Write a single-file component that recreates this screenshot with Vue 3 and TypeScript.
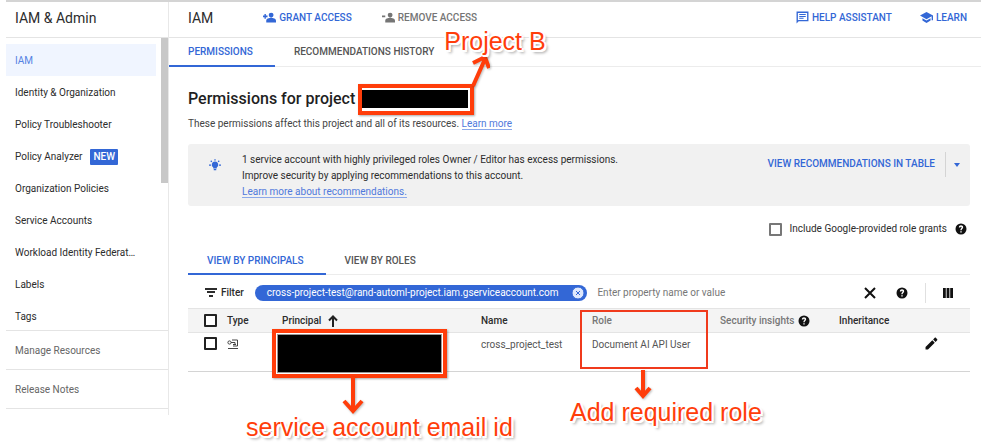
<script setup lang="ts">
import { ref } from 'vue'

interface NavItem {
  label: string
  badge?: string
}

const navItems: NavItem[] = [
  { label: 'IAM' },
  { label: 'Identity & Organization' },
  { label: 'Policy Troubleshooter' },
  { label: 'Policy Analyzer', badge: 'NEW' },
  { label: 'Organization Policies' },
  { label: 'Service Accounts' },
  { label: 'Workload Identity Federat…' },
  { label: 'Labels' },
  { label: 'Tags' },
]
const footerItems: string[] = ['Manage Resources', 'Release Notes']

const activeNav = ref('IAM')
const query = ref('')
const includeGrants = ref(false)
const allSelected = ref(false)
const rowSelected = ref(false)

const helpPath =
  'M12 1a11 11 0 1 0 0 22 11 11 0 0 0 0-22zm1.400 18h-2.800v-2.600h2.800V19zm2.600-9.200c-.6 1.300-2.600 2.200-2.600 4.900h-2.800c0-3.700 2.700-4.300 2.700-6.100 0-.8-.6-1.300-1.300-1.300s-1.400.6-1.400 1.700H7.700C7.700 6.500 9.500 4.700 12 4.700s4.300 1.500 4.300 3.700c0 .5-.1 1-.3 1.400z'
</script>

<template>
  <div class="console">
    <aside class="sidebar">
      <h2 class="product">IAM &amp; Admin</h2>
      <div class="scroller">
        <nav class="nav">
          <a
            v-for="item in navItems"
            :key="item.label"
            href="#"
            class="nav-item"
            :class="{ active: item.label === activeNav }"
            @click.prevent="activeNav = item.label"
          >
            {{ item.label }}<span v-if="item.badge" class="badge">{{ item.badge }}</span>
          </a>
        </nav>
        <div class="scrollbar"></div>
      </div>
      <a v-for="label in footerItems" :key="label" href="#" class="footer-item">{{ label }}</a>
    </aside>

    <main class="main">
      <header class="toolbar">
        <h1 class="page-name">IAM</h1>
        <button class="action primary grant">
          <svg class="icon" viewBox="0 0 24 24"><path d="M15 12a4.500 4.500 0 1 0 0-9 4.500 4.500 0 0 0 0 9zm0 .5c-3.500 0-9 1.600-9 5.300V21h18v-3.200c0-3.700-5.500-5.300-9-5.300zM5.300 11.500h3V8.500h-3V5.500h-2.600v3H0v3h2.700v3h2.600z" /></svg>
          GRANT ACCESS
        </button>
        <button class="action muted">
          <svg class="icon" viewBox="0 0 24 24"><path d="M15 12a4.500 4.500 0 1 0 0-9 4.500 4.500 0 0 0 0 9zm0 .5c-3.500 0-9 1.600-9 5.300V21h18v-3.200c0-3.700-5.500-5.300-9-5.300zM0 8.500h6v3H0z" /></svg>
          REMOVE ACCESS
        </button>
        <div class="toolbar-end">
          <button class="action primary">
            <svg class="icon" viewBox="0 0 24 24"><path fill-rule="evenodd" d="M1 1v22l4-4h18V1zm2.500 2.500h17v13H4.400l-.9.900zM6 5.500h12v2H6zm0 3.500h12v2H6zm0 3.500h8v2H6z" /></svg>
            HELP ASSISTANT
          </button>
          <button class="action primary">
            <svg class="icon" viewBox="0 0 24 24"><path d="M4.500 13.200v4.500L12 22l7.500-4.300v-4.500L12 17.500zM12 2 0 8.500 12 15l9.500-5.200V17H24V8.500z" /></svg>
            LEARN
          </button>
        </div>
      </header>

      <div class="tabs">
        <button class="tab selected">PERMISSIONS</button>
        <button class="tab">RECOMMENDATIONS HISTORY</button>
      </div>

      <section class="content">
        <div class="title-row">
          <h3 class="title">Permissions for project</h3>
          <div class="frame project-frame">
            <div class="redacted"></div>
            <svg class="arrow project-arrow" viewBox="0 0 20 34"><path d="M3 32 15 5M3 9 15 3l4 11" /></svg>
            <span class="note project-note">Project B</span>
          </div>
        </div>
        <p class="subtitle">
          These permissions affect this project and all of its resources.
          <a href="#" class="link">Learn more</a>
        </p>

        <div class="banner">
          <svg class="bulb" viewBox="0 0 24 24"><path d="M12 5a6.500 6.500 0 0 0-3.500 12v2h7v-2A6.500 6.500 0 0 0 12 5zM9.500 20h5v2.500h-5zM11 0h2v3.500h-2zM0 11h4v2.500H0zm20 0h4v2.500h-4zM2.600 4.400 4.400 2.600l2.200 2.200-1.800 1.800zM19.600 2.600l1.800 1.800-2.200 2.200-1.800-1.800z" /></svg>
          <div class="banner-text">
            1 service account with highly privileged roles Owner / Editor has excess permissions.<br />
            Improve security by applying recommendations to this account.<br />
            <a href="#" class="link">Learn more about recommendations.</a>
          </div>
          <button class="action primary">VIEW RECOMMENDATIONS IN TABLE</button>
          <button class="more" aria-label="More options">
            <svg viewBox="0 0 6 4"><path d="M0 0h6L3 4z" /></svg>
          </button>
        </div>

        <div class="grants">
          <label class="check-label">
            <input v-model="includeGrants" type="checkbox" class="check soft" />
            Include Google-provided role grants
          </label>
          <svg class="help" viewBox="0 0 24 24"><path :d="helpPath" /></svg>
        </div>

        <div class="tabs view-tabs">
          <button class="tab selected">VIEW BY PRINCIPALS</button>
          <button class="tab">VIEW BY ROLES</button>
        </div>

        <div class="filter">
          <svg class="filter-icon" viewBox="0 0 12 9"><path d="M0 0h12v2H0zM2 3h8v2H2zM4 7h4v2H4z" /></svg>
          <label for="filter-input" class="filter-label">Filter</label>
          <span class="chip">
            cross-project-test@rand-automl-project.iam.gserviceaccount.com
            <button class="chip-close" aria-label="Remove filter">
              <svg viewBox="0 0 12 12"><circle cx="6" cy="6" r="6" /><path d="m4 4 4 4M8 4 4 8" /></svg>
            </button>
          </span>
          <input id="filter-input" v-model="query" class="filter-input" placeholder="Enter property name or value" />
          <button class="icon-button" aria-label="Clear filters">
            <svg class="clear" viewBox="0 0 12 12"><path d="m1 1 10 10M11 1 1 11" /></svg>
          </button>
          <button class="icon-button" aria-label="Filter help">
            <svg class="help" viewBox="0 0 24 24"><path :d="helpPath" /></svg>
          </button>
          <span class="separator"></span>
          <button class="icon-button" aria-label="Columns">
            <svg class="columns" viewBox="0 0 10 10"><path d="M0 0h2.800v10H0zM3.600 0h2.800v10H3.600zM7.200 0H10v10H7.200z" /></svg>
          </button>
        </div>

        <table class="table">
          <colgroup>
            <col class="c-check" /><col class="c-type" /><col class="c-principal" /><col class="c-name" />
            <col class="c-role" /><col class="c-insights" /><col class="c-inheritance" /><col />
          </colgroup>
          <thead>
            <tr>
              <th><input v-model="allSelected" type="checkbox" class="check" aria-label="Select all" /></th>
              <th>Type</th>
              <th>
                <span class="head-cell">Principal
                  <svg class="sort" viewBox="0 0 10 12"><path d="M5 12V1.500M1 5.500l4-4 4 4" /></svg>
                </span>
              </th>
              <th>Name</th>
              <th class="light">Role</th>
              <th class="light">
                <span class="head-cell insights">Security insights
                  <svg class="help" viewBox="0 0 24 24"><path :d="helpPath" /></svg>
                </span>
              </th>
              <th>Inheritance</th>
              <th></th>
            </tr>
          </thead>
          <tbody>
            <tr>
              <td><input v-model="rowSelected" type="checkbox" class="check" aria-label="Select cross_project_test" /></td>
              <td>
                <svg class="account" viewBox="0 0 12 10"><circle cx="2.500" cy="3.500" r="1.600" /><path d="M4 3.500h4v1.500M5 1h5.500v6H6M6 5.500h3M1 9.500h10" /></svg>
              </td>
              <td class="marked">
                <div class="frame principal-frame">
                  <div class="redacted"></div>
                  <svg class="arrow principal-arrow" viewBox="0 0 22 38"><path d="M11 0v34M2 24l9 10 9-10" /></svg>
                  <span class="note principal-note">service account email id</span>
                </div>
              </td>
              <td>cross_project_test</td>
              <td class="marked">
                <div class="role-frame">
                  <svg class="arrow role-arrow" viewBox="0 0 18 30"><path d="M9 0v26M2 18l7 8 7-8" /></svg>
                  <span class="note role-note">Add required role</span>
                </div>
                <div class="role">Document AI API User</div>
              </td>
              <td></td>
              <td></td>
              <td>
                <button class="edit" aria-label="Edit principal">
                  <svg viewBox="0 0 24 24"><path d="M1 18.500V23h4.500L18 10.500 13.500 6zM22.500 6c.6-.6.600-1.400 0-2l-2.500-2.500c-.6-.6-1.400-.6-2 0L15 4.500 19.500 9z" /></svg>
                </button>
              </td>
            </tr>
          </tbody>
        </table>
      </section>
    </main>
  </div>
</template>

<style>
body {
  background: #fff;
}
</style>

<style scoped>
.console {
  --blue: #3367d6;
  --line: #e4e4e4;
  --red: #ff3d0a;
  display: flex;
  align-items: flex-start;
  margin-left: 6px;
  border-top: 2px solid #d4d4d4;
  font: 10px/16px Roboto, sans-serif;
  color: #2c2c2c;
}
* {
  box-sizing: border-box;
}
h1, h2, h3, p {
  margin: 0;
  font-weight: 400;
}
button {
  padding: 0;
  border: 0;
  background: none;
  font: inherit;
  color: inherit;
}
svg {
  display: block;
  flex: none;
  fill: currentColor;
}
a {
  color: inherit;
  text-decoration: none;
}
.sidebar {
  flex: none;
  width: 163px;
  height: 413px;
  border-right: 1px solid #e8e8e8;
}
.product, .page-name {
  font-size: 14px;
  line-height: 32px;
}
.product {
  height: 36px;
  padding-left: 9px;
  border-bottom: 1px solid var(--line);
}
.scroller {
  display: flex;
  height: 293px;
  overflow: hidden;
  border-bottom: 1px solid var(--line);
}
.nav {
  flex: 1;
  padding-top: 6px;
}
.nav-item {
  display: flex;
  align-items: center;
  gap: 8px;
  height: 32px;
  margin-right: 5px;
  padding: 2px 0 0 9px;
  white-space: nowrap;
}
.nav-item.active {
  background: #f0f5ff;
  color: #5583e3;
}
.badge {
  padding: 0 3px;
  border-radius: 1px;
  background: var(--blue);
  color: #fff;
  font-weight: 500;
}
.scrollbar {
  width: 7px;
  height: 145px;
  background: #c8c8c8;
}
.footer-item {
  display: block;
  height: 39px;
  padding-left: 9px;
  border-bottom: 1px solid var(--line);
  line-height: 40px;
  color: #666;
}
.main {
  flex: 1;
  min-width: 0;
}
.toolbar {
  display: flex;
  align-items: center;
  height: 36px;
  padding: 0 14px 4px 19px;
  border-bottom: 1px solid var(--line);
}
.action {
  display: flex;
  align-items: center;
  gap: 3px;
  font-weight: 500;
  white-space: nowrap;
}
.grant {
  margin: 0 30px 0 50px;
}
.primary {
  color: var(--blue);
}
.muted {
  color: #757575;
}
.icon {
  width: 13px;
  height: 13px;
}
.toolbar-end {
  display: flex;
  gap: 28px;
  margin-left: auto;
}
.tabs {
  display: flex;
  height: 29px;
  border-bottom: 1px solid #ececec;
}
.tab {
  height: 29px;
  padding: 0 22px 0 19px;
  border-bottom: 2px solid transparent;
  font-weight: 500;
  color: #555;
}
.tab.selected {
  border-color: var(--blue);
  color: var(--blue);
}
.view-tabs .tab {
  padding-top: 2px;
}
.content {
  padding: 17px 11px 0 19px;
}
.title-row {
  display: flex;
  align-items: center;
  gap: 3px;
}
.title {
  margin-top: -2px;
  font-size: 16px;
  font-weight: 500;
  color: #1f1f1f;
}
.frame {
  position: relative;
  border: 4px solid var(--red);
  box-shadow: 1px 1px 2px #0005;
}
.redacted {
  height: 100%;
  background: #000;
}
.project-frame {
  width: 116px;
  height: 31px;
  padding: 2px 2px 3px 0;
}
.note {
  position: absolute;
  color: var(--red);
  font: 25px/28px "Liberation Sans", sans-serif;
  white-space: nowrap;
  text-shadow: 2px 0 #fff, -2px 0 #fff, 0 2px #fff, 0 -2px #fff, 2px 2px #fff, -1px -1px #fff, 3px 3px 3px #0006;
}
.arrow {
  position: absolute;
  fill: none;
  stroke: var(--red);
  stroke-width: 4;
  filter: drop-shadow(1px 1px 1px #0004);
}
.project-arrow {
  left: 108px;
  top: -34px;
  width: 20px;
  height: 34px;
}
.project-note {
  left: 82px;
  top: -61px;
}
.subtitle {
  padding-top: 1px;
  color: #444;
}
.link {
  border-bottom: 1px solid #8ba8ea;
  color: #5079dc;
}
.banner {
  display: flex;
  align-items: flex-start;
  margin-top: 12px;
  padding: 8px 10px 6px 21px;
  border-radius: 3px;
  background: #f1f1f1;
}
.bulb {
  width: 12px;
  height: 12px;
  margin: 7px 21px 0 0;
  color: var(--blue);
}
.banner-text {
  flex: 1;
}
.banner .action {
  margin-top: 4px;
}
.more {
  display: flex;
  align-items: center;
  height: 25px;
  margin-left: 10px;
  padding-left: 8px;
  border-left: 1px solid #d4d4d4;
  color: var(--blue);
}
.more svg {
  width: 6px;
  height: 4px;
}
.grants {
  display: flex;
  align-items: center;
  justify-content: flex-end;
  gap: 8px;
  height: 40px;
  padding: 6px 3px 0 0;
}
.check-label {
  display: flex;
  align-items: center;
  gap: 8px;
}
.check {
  display: block;
  appearance: none;
  width: 13px;
  height: 13px;
  margin: 0;
  border: 2px solid #222;
  border-radius: 1px;
  background: #fff;
}
.check.soft {
  border-color: #777;
}
.check:checked {
  background: var(--blue);
}
.help {
  width: 12px;
  height: 12px;
  color: #111;
}
.filter {
  display: flex;
  align-items: center;
  height: 33px;
  padding: 2px 17px 0;
}
.filter-icon {
  width: 12px;
  height: 9px;
  margin-right: 4px;
}
.filter-label {
  margin-right: 11px;
  font-weight: 500;
}
.chip {
  display: flex;
  align-items: center;
  gap: 14px;
  height: 16px;
  padding: 0 3px 0 12px;
  border-radius: 8px;
  background: var(--blue);
  color: #fff;
  white-space: nowrap;
}
.chip-close svg {
  width: 12px;
  height: 12px;
  fill: #dfe8fc;
  stroke: var(--blue);
}
.filter-input {
  flex: 1;
  min-width: 0;
  margin-left: 10px;
  padding: 0;
  border: 0;
  outline: 0;
  background: none;
  font: inherit;
}
.filter-input::placeholder {
  color: #777;
}
.icon-button {
  margin-left: 20px;
  color: #111;
}
.clear {
  width: 12px;
  height: 12px;
  stroke: #111;
  stroke-width: 2;
}
.separator {
  width: 1px;
  height: 20px;
  margin-left: 17px;
  background: #e0e0e0;
}
.separator + .icon-button {
  margin-left: 17px;
}
.columns {
  width: 10px;
  height: 10px;
}
.table {
  width: 100%;
  border-collapse: separate;
  border-spacing: 0;
  table-layout: fixed;
}
.c-check { width: 39px; }
.c-type { width: 55px; }
.c-principal { width: 199px; }
.c-name { width: 111px; }
.c-role { width: 128px; }
.c-insights { width: 119px; }
.c-inheritance { width: 86px; }
th, td {
  padding: 0;
  text-align: left;
  white-space: nowrap;
  border-bottom: 1px solid #e4e4e4;
}
th {
  height: 25px;
  border-top: 1px solid #e4e4e4;
  background: #f4f4f4;
  font-weight: 500;
}
th.light {
  color: #777;
}
td {
  height: 39px;
  padding-top: 4px;
  vertical-align: top;
  border-color: #d4d4d4;
  color: #555;
}
th .check, td .check {
  margin-left: 16px;
}
.head-cell {
  display: flex;
  align-items: center;
  gap: 7px;
}
.head-cell.insights {
  gap: 3px;
}
.sort {
  width: 10px;
  height: 12px;
  fill: none;
  stroke: #222;
  stroke-width: 2;
}
td.marked {
  padding: 0;
}
.role {
  padding-top: 4px;
}
.role-frame {
  position: absolute;
  width: 128px;
  height: 59px;
  margin: -23px 0 0 -12px;
  border: 2px solid #f03a1c;
}
.role-arrow {
  left: 52px;
  top: 58px;
  width: 18px;
  height: 30px;
}
.role-note {
  left: -12px;
  top: 86px;
}
.account {
  width: 12px;
  height: 10px;
  margin-top: 2px;
  fill: none;
  stroke: #444;
}
.principal-frame {
  position: absolute;
  width: 175px;
  height: 49px;
  margin: -4px 0 0 -10px;
  padding: 1px;
  background: #fff;
}
.principal-frame .redacted {
  border: 1px solid #999;
}
.principal-arrow {
  left: 66px;
  top: 44px;
  width: 22px;
  height: 38px;
}
.principal-note {
  left: -30px;
  top: 80px;
}
.edit svg {
  width: 13px;
  height: 13px;
  color: #111;
}
</style>
